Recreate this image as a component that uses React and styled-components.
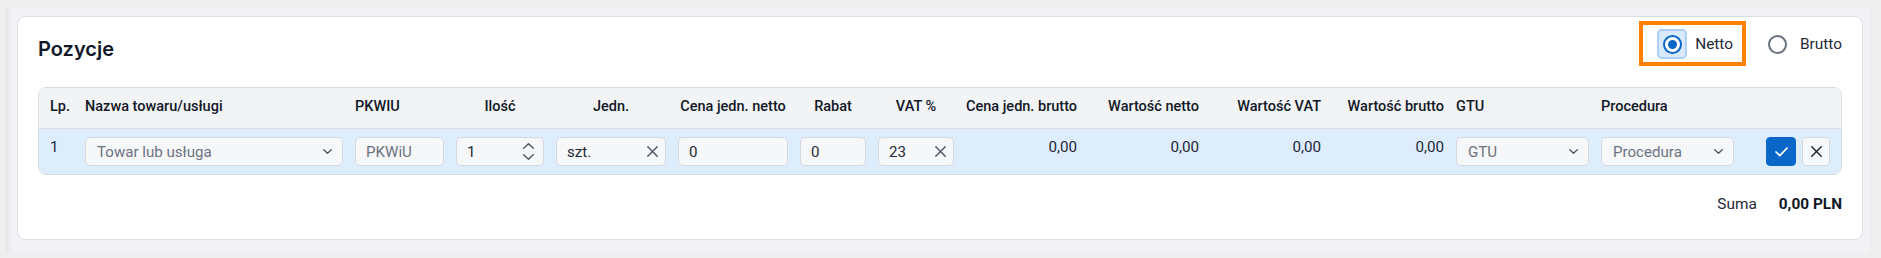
import React from "react";
import styled, { createGlobalStyle, css } from "styled-components";

const GlobalStyle = createGlobalStyle`
  html, body { margin: 0; padding: 0; }
  body {
    background: #eeeeee;
    font-family: Roboto, "Liberation Sans", Arial, sans-serif;
    color: #1f2937;
  }
  *, *::before, *::after { box-sizing: border-box; }
`;

const Viewport = styled.div`
  background: #eeeeee;
  padding: 8px 11px 5px 6px;
`;

const Panel = styled.div`
  background: #f2f2f6;
  padding: 8px 7px 13px 11px;
  box-shadow: inset 9px 0 6px -7px rgba(0, 0, 0, 0.07);
`;

const Card = styled.section`
  background: #ffffff;
  border: 1px solid #dcdee2;
  border-radius: 8px;
  padding: 12px 20px 25px;
`;

const CardHeader = styled.div`
  display: flex;
  justify-content: space-between;
  align-items: flex-start;
`;

const Title = styled.h2`
  margin: 6px 0 0;
  font-family: Inter, "Noto Sans", sans-serif;
  font-weight: 600;
  font-size: 20px;
  line-height: 28px;
  letter-spacing: 0;
  color: #111827;
`;

const RadioGroup = styled.div`
  display: flex;
  align-items: center;
  gap: 29px;
`;

const RadioOption = styled.label`
  position: relative;
  display: flex;
  align-items: center;
  gap: 8px;
  font-size: 15.4px;
  line-height: 20px;
  color: #1f2937;
  cursor: pointer;
  ${(p) =>
    p.$highlight &&
    css`
      &::after {
        content: "";
        position: absolute;
        top: -8px;
        bottom: -7px;
        left: -18px;
        right: -13px;
        border: 4px solid #ff8000;
        pointer-events: none;
      }
    `}
`;

const RadioFrame = styled.span`
  width: 30px;
  height: 30px;
  display: flex;
  align-items: center;
  justify-content: center;
  border-radius: 5px;
  ${(p) =>
    p.$focused &&
    css`
      background: #d9e9fc;
      box-shadow: inset 0 0 0 2px #aed0f8;
    `}
`;

const RadioCircle = styled.span`
  width: 19px;
  height: 19px;
  border-radius: 50%;
  border: 2px solid ${(p) => (p.$checked ? "#0a66c8" : "#6b7280")};
  background: #ffffff;
  display: flex;
  align-items: center;
  justify-content: center;
  &::after {
    content: "";
    width: 9px;
    height: 9px;
    border-radius: 50%;
    background: ${(p) => (p.$checked ? "#0a66c8" : "transparent")};
  }
`;

const COLUMNS =
  "23px minmax(0, 1fr) 89px 88px 110px 110px 66px 76px 111px 110px 110px 111px 133px 133px 84px";

const Table = styled.div`
  margin-top: 24px;
  border: 1px solid #d9dce0;
  border-radius: 8px;
  overflow: hidden;
`;

const Row = styled.div`
  display: grid;
  grid-template-columns: ${COLUMNS};
  column-gap: 12px;
  align-items: start;
  ${(p) =>
    p.$head
      ? css`
          padding: 9px 11px 11px;
          background: #f2f3f5;
          border-bottom: 1px solid #d9dce0;
        `
      : css`
          padding: 8px 11px 8px;
          background: #deedfc;
        `}
`;

const HeadCell = styled.div`
  font-size: 14.5px;
  line-height: 20px;
  font-weight: 500;
  color: #111827;
  white-space: nowrap;
  text-align: ${(p) => p.$align || "left"};
`;

const Cell = styled.div`
  font-size: 15.2px;
  line-height: 20px;
  color: #1f2937;
  white-space: nowrap;
  text-align: ${(p) => p.$align || "left"};
`;

const Field = styled.div`
  height: 29px;
  display: flex;
  align-items: center;
  justify-content: space-between;
  padding: 0 ${(p) => p.$pr || 10}px 0 ${(p) => p.$pl || 10}px;
  background: #f6f7f9;
  border: 1px solid #d5d8dd;
  border-radius: 5px;
  font-size: 15.1px;
  line-height: 20px;
  color: ${(p) => (p.$placeholder ? "#6b7280" : "#1f2937")};
  white-space: nowrap;
  overflow: hidden;
`;

const Spinner = styled.span`
  display: flex;
  flex-direction: column;
  gap: 5px;
  color: #4b5563;
`;

const Actions = styled.div`
  display: flex;
  justify-content: flex-end;
  gap: 6px;
`;

const IconButton = styled.button`
  height: 29px;
  width: ${(p) => (p.$primary ? 30 : 28)}px;
  padding: 0;
  display: flex;
  align-items: center;
  justify-content: center;
  border-radius: 4px;
  cursor: pointer;
  ${(p) =>
    p.$primary
      ? css`
          background: #0a66c8;
          border: 1px solid #0a66c8;
          color: #ffffff;
        `
      : css`
          background: #f7f8fa;
          border: 1px solid #d5d8dd;
          color: #1f2937;
        `}
`;

const Footer = styled.div`
  margin-top: 19px;
  display: flex;
  justify-content: flex-end;
  gap: 22px;
  font-size: 15.4px;
  line-height: 20px;
`;

const SumLabel = styled.span`
  color: #1f2937;
`;

const SumValue = styled.span`
  font-weight: 700;
  color: #111827;
`;

const Chevron = ({ dir = "down", w = 9, h = 5, sw = 1.3 }) => (
  <svg width={w} height={h} viewBox={`0 0 ${w} ${h}`} fill="none" stroke="currentColor" strokeWidth={sw} strokeLinecap="round" strokeLinejoin="round">
    {dir === "down" ? (
      <polyline points={`0.7,0.7 ${w / 2},${h - 0.7} ${w - 0.7},0.7`} />
    ) : (
      <polyline points={`0.7,${h - 0.7} ${w / 2},0.7 ${w - 0.7},${h - 0.7}`} />
    )}
  </svg>
);

const Cross = ({ size = 11, sw = 1.4 }) => (
  <svg width={size} height={size} viewBox={`0 0 ${size} ${size}`} fill="none" stroke="currentColor" strokeWidth={sw} strokeLinecap="round">
    <line x1="0.8" y1="0.8" x2={size - 0.8} y2={size - 0.8} />
    <line x1={size - 0.8} y1="0.8" x2="0.8" y2={size - 0.8} />
  </svg>
);

const Check = () => (
  <svg width="13" height="10" viewBox="0 0 13 10" fill="none" stroke="currentColor" strokeWidth="1.7" strokeLinecap="round" strokeLinejoin="round">
    <polyline points="1,5 4.8,8.6 12,1.2" />
  </svg>
);

const IconSlot = styled.span`
  display: flex;
  align-items: center;
  color: #4b5563;
`;

const SelectField = ({ placeholder }) => (
  <Field $placeholder $pl={11} $pr={10}>
    <span>{placeholder}</span>
    <IconSlot>
      <Chevron />
    </IconSlot>
  </Field>
);

const ClearField = ({ value }) => (
  <Field $pr={7}>
    <span>{value}</span>
    <IconSlot>
      <Cross />
    </IconSlot>
  </Field>
);

const headers = [
  { label: "Lp." },
  { label: "Nazwa towaru/usługi" },
  { label: "PKWIU" },
  { label: "Ilość", align: "center" },
  { label: "Jedn.", align: "center" },
  { label: "Cena jedn. netto", align: "center" },
  { label: "Rabat", align: "center" },
  { label: "VAT %", align: "center" },
  { label: "Cena jedn. brutto", align: "right" },
  { label: "Wartość netto", align: "right" },
  { label: "Wartość VAT", align: "right" },
  { label: "Wartość brutto", align: "right" },
  { label: "GTU" },
  { label: "Procedura" },
  { label: "" },
];

export default function App() {
  return (
    <>
      <GlobalStyle />
      <Viewport>
        <Panel>
          <Card>
            <CardHeader>
              <Title>Pozycje</Title>
              <RadioGroup>
                <RadioOption $highlight>
                  <RadioFrame $focused>
                    <RadioCircle $checked />
                  </RadioFrame>
                  Netto
                </RadioOption>
                <RadioOption>
                  <RadioFrame>
                    <RadioCircle />
                  </RadioFrame>
                  Brutto
                </RadioOption>
              </RadioGroup>
            </CardHeader>

            <Table>
              <Row $head>
                {headers.map((h, i) => (
                  <HeadCell key={i} $align={h.align}>
                    {h.label}
                  </HeadCell>
                ))}
              </Row>
              <Row>
                <Cell>1</Cell>
                <SelectField placeholder="Towar lub usługa" />
                <Field $placeholder>PKWiU</Field>
                <Field $pr={9}>
                  <span>1</span>
                  <Spinner>
                    <Chevron dir="up" w={11} h={6} sw={1.4} />
                    <Chevron dir="down" w={11} h={6} sw={1.4} />
                  </Spinner>
                </Field>
                <ClearField value="szt." />
                <Field>0</Field>
                <Field>0</Field>
                <ClearField value="23" />
                <Cell $align="right">0,00</Cell>
                <Cell $align="right">0,00</Cell>
                <Cell $align="right">0,00</Cell>
                <Cell $align="right">0,00</Cell>
                <SelectField placeholder="GTU" />
                <SelectField placeholder="Procedura" />
                <Actions>
                  <IconButton $primary aria-label="Zatwierdź">
                    <Check />
                  </IconButton>
                  <IconButton aria-label="Anuluj">
                    <Cross size={11} sw={1.5} />
                  </IconButton>
                </Actions>
              </Row>
            </Table>

            <Footer>
              <SumLabel>Suma</SumLabel>
              <SumValue>0,00 PLN</SumValue>
            </Footer>
          </Card>
        </Panel>
      </Viewport>
    </>
  );
}
